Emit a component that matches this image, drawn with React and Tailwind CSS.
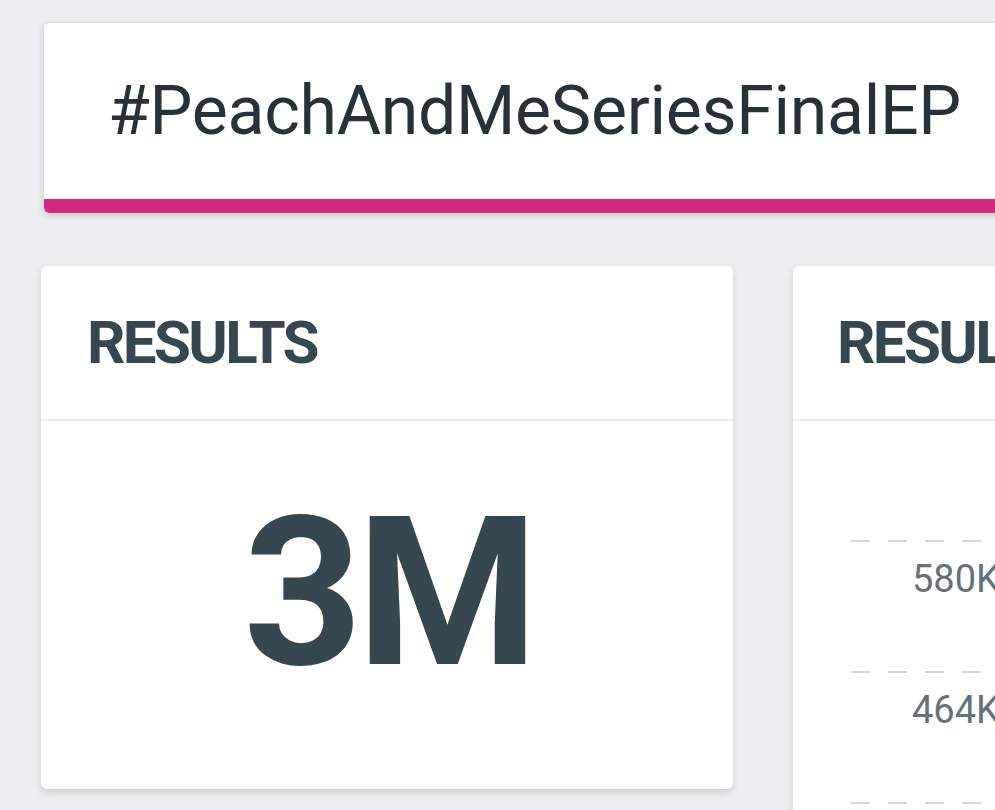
export default function App() {
  const ticks = ["580K", "464K", "348K"]

  return (
    <div className="w-[995px] h-[810px] overflow-hidden bg-[#eceef0]">
      <div className="w-[1600px] pt-[22px] pl-[41px]">
        {/* hashtag banner */}
        <div className="ml-[2px] w-[1500px] h-[191px] flex flex-col rounded-[6px] bg-white overflow-hidden shadow-[0_3px_6px_rgba(0,0,0,0.14)] border-t border-l border-[#d8dde0]">
          <div className="flex-1 flex items-center pl-[64px]">
            <h1 className="text-[68px] leading-none text-[#263238] font-['Roboto',sans-serif] tracking-[-0.3px] whitespace-nowrap">
              #PeachAndMeSeriesFinalEP
            </h1>
          </div>
          <div className="h-[14px] shrink-0 bg-[#d32a7b]" />
        </div>

        <div className="mt-[53px] flex gap-[60px]">
          {/* count card */}
          <div className="w-[692px] h-[523px] shrink-0 flex flex-col rounded-[6px] bg-white shadow-[0_4px_8px_rgba(0,0,0,0.13)]">
            <div className="h-[155px] shrink-0 flex items-center pl-[46px] border-b-2 border-[#eceef0]">
              <h2 className="text-[60px] leading-none font-bold text-[#37474f] font-['Roboto',sans-serif] tracking-[-2.6px]">
                RESULTS
              </h2>
            </div>
            <div className="flex-1 flex items-center justify-center pb-[24px] pl-[2px]">
              <span className="text-[208px] leading-none font-bold text-[#37474f] font-['Roboto',sans-serif] tracking-[-6px]">
                3M
              </span>
            </div>
          </div>

          {/* chart card */}
          <div className="w-[692px] h-[600px] shrink-0 flex flex-col rounded-[6px] bg-white shadow-[0_4px_8px_rgba(0,0,0,0.13)]">
            <div className="h-[155px] shrink-0 flex items-center pl-[44px] border-b-2 border-[#eceef0]">
              <h2 className="text-[60px] leading-none font-bold text-[#37474f] font-['Roboto',sans-serif] tracking-[-2.6px] whitespace-nowrap">
                RESULTS OVER TIME
              </h2>
            </div>
            <div className="pt-[119px] pl-[58px]">
              {ticks.map((t) => (
                <div key={t} className="h-[131px]">
                  <div className="h-[2px] w-[500px] bg-[repeating-linear-gradient(90deg,#d6d9dc_0,#d6d9dc_19px,transparent_19px,transparent_37px)]" />
                  <div className="mt-[18px] pl-[61px] text-[38px] leading-none text-[#66727a] font-['Roboto',sans-serif]">
                    {t}
                  </div>
                </div>
              ))}
            </div>
          </div>
        </div>
      </div>
    </div>
  )
}
